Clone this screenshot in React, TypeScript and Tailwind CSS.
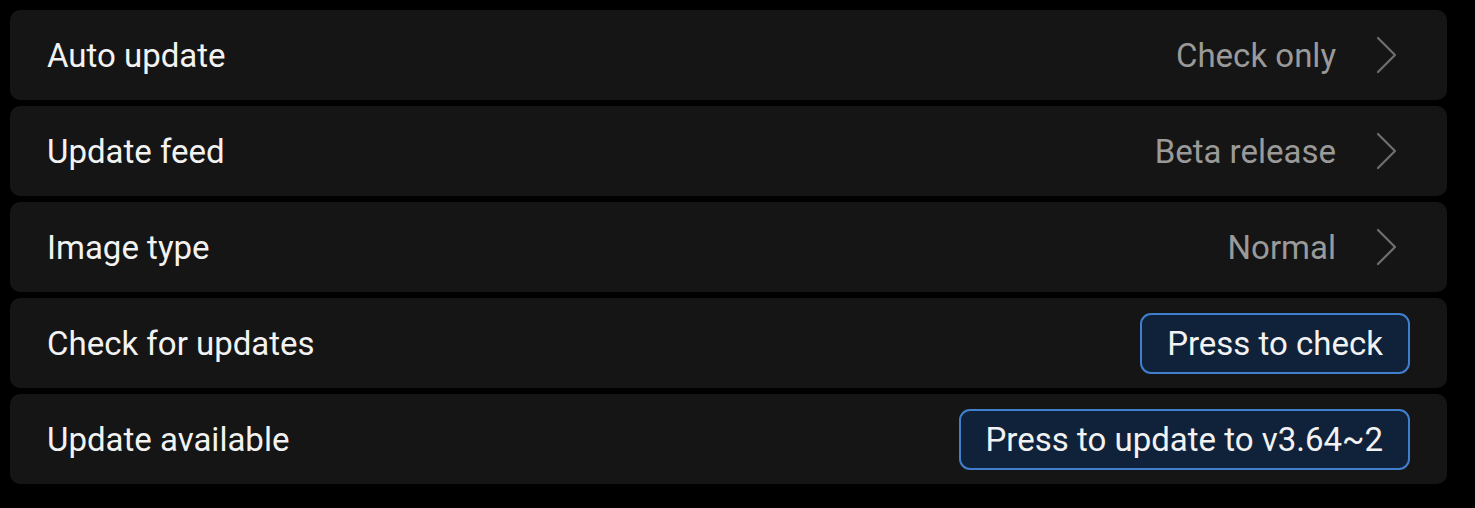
const rows = [
  { label: "Auto update", value: "Check only" },
  { label: "Update feed", value: "Beta release" },
  { label: "Image type", value: "Normal" },
  { label: "Check for updates", button: "Press to check" },
  { label: "Update available", button: "Press to update to v3.64~2" },
];

function Chevron() {
  return (
    <svg width="22" height="38" viewBox="0 0 22 38" fill="none" className="ml-[40px] mr-[12px]">
      <path d="M2 2 L19 19 L2 36" stroke="#6f6f6f" strokeWidth="2.2" strokeLinecap="round" strokeLinejoin="round" />
    </svg>
  );
}

export default function App() {
  return (
    <div
      className="w-[1475px] h-[508px] bg-black pt-[10px] pl-[10px] pr-[28px] flex flex-col gap-[6px]"
      style={{ fontFamily: "Roboto, 'Noto Sans', sans-serif" }}
    >
      {rows.map((r) => (
        <div
          key={r.label}
          className="h-[90px] rounded-[10px] bg-[#151515] flex items-center justify-between pl-[37px] pr-[37px]"
        >
          <span className="text-[33px] text-[#f2f2f2] pt-[2px]">{r.label}</span>
          {r.value ? (
            <div className="flex items-center">
              <span className="text-[33px] text-[#9a9a9a] pt-[2px]">{r.value}</span>
              <Chevron />
            </div>
          ) : (
            <button className="h-[61px] px-[25px] rounded-[11px] border-[2.5px] border-[#3f7fcd] bg-[#10223a] text-[33px] text-[#f2f2f2] leading-none">
              {r.button}
            </button>
          )}
        </div>
      ))}
    </div>
  );
}
